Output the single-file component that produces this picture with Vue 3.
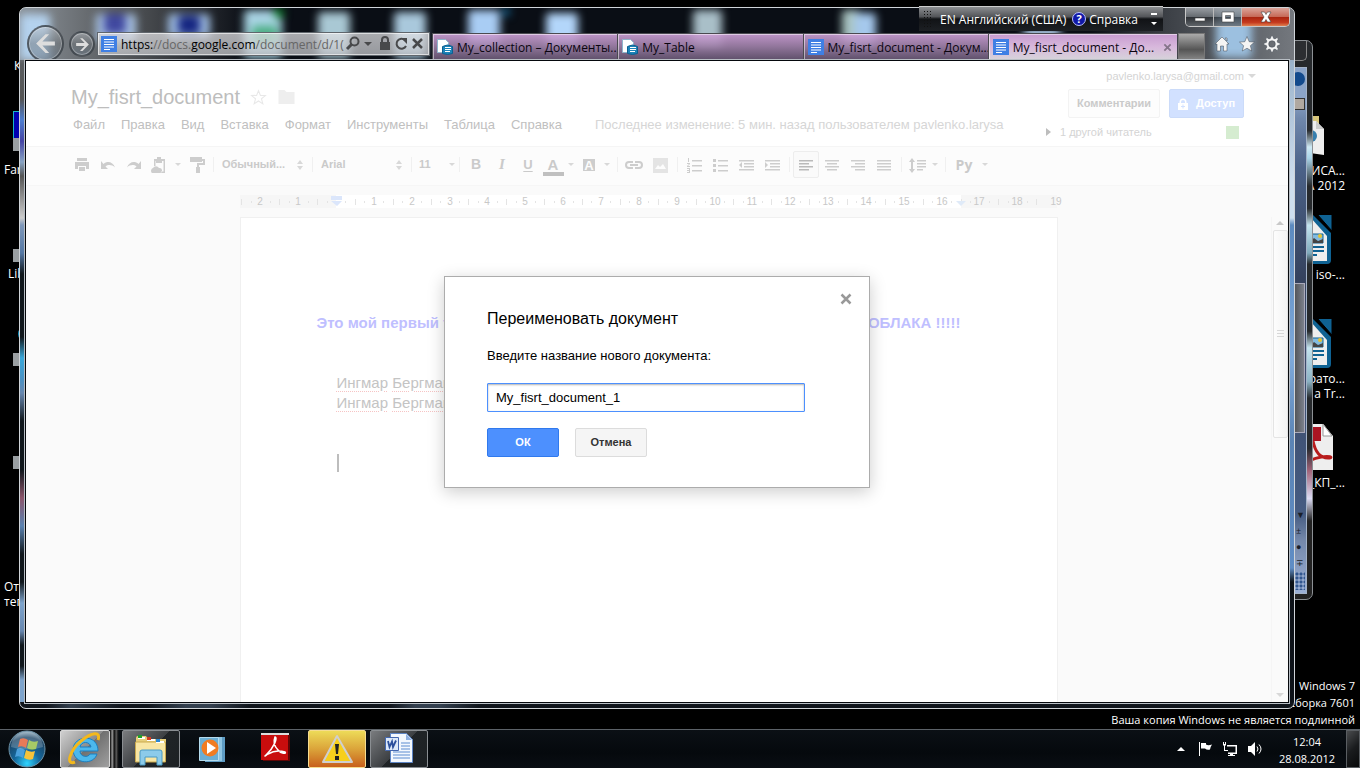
<script setup>
import { ref } from 'vue'

const docName = ref('My_fisrt_document_1')

const menus = ['Файл', 'Правка', 'Вид', 'Вставка', 'Формат', 'Инструменты', 'Таблица', 'Справка']

const tabs = [
  { title: 'My_collection – Документы...', kind: 'drive' },
  { title: 'My_Table', kind: 'drive' },
  { title: 'My_fisrt_document - Докум...', kind: 'doc' },
  { title: 'My_fisrt_document - До...', kind: 'doc', active: true },
]

const lines = (rows) => rows.map(([x, y, w]) => `M${x} ${y}h${w}v1.5h-${w}z`).join('')

const tools = [
  { name: 'Печать', d: 'M4 2h10v3H4zM2 6h14v7h-3v-3H5v3H2zM6 11h6v4H6z' },
  { name: 'Отменить', d: 'M2 5v8h7L6.5 10.500C9 8.500 13 8.500 16 11.500C14 6 8.500 4.500 4.500 8z' },
  { name: 'Повторить', d: 'M16 5v8H9l2.500-2.500C9 8.500 5 8.500 2 11.500C4 6 9.500 4.500 13.500 8z' },
  { name: 'Вставить', size: 'mid', d: 'M4 3h3V1h4v2h4v14h-4v-1.500h2.500V5H12v2H6V5H5.500v5H4zM2 17a3 3 0 0 1 1-5 3.500 3.500 0 0 1 6 0 2.500 2.500 0 0 1 1 5z' },
  { arrow: true },
  { name: 'Формат по образцу', size: 'mid', d: 'M2 1h12v2h3v6h-6v2h1v6H8v-6h1V7h6V5h-1v1H2z' },
  { sep: true },
  { select: 'Обычный...', label: 'Стиль' },
  { sep: true },
  { select: 'Arial', label: 'Шрифт' },
  { sep: true },
  { select: '11', label: 'Размер', small: true },
  { sep: true },
  { name: 'Полужирный', text: 'B', cls: 'bold' },
  { name: 'Курсив', text: 'I', cls: 'italic' },
  { name: 'Подчеркнутый', text: 'U', cls: 'under' },
  { name: 'Цвет текста', text: 'A', cls: 'ink', size: 'mid' },
  { arrow: true, tight: true },
  { name: 'Цвет фона', text: 'A', cls: 'mark', size: 'mid' },
  { arrow: true, tight: true },
  { sep: true },
  { name: 'Ссылка', d: 'M8 5H4a4 4 0 0 0 0 8h4v-2H4a2 2 0 0 1 0-4h4zM10 5h4a4 4 0 0 1 0 8h-4v-2h4a2 2 0 0 0 0-4h-4zM5 8h8v2H5z' },
  { name: 'Изображение', pale: true, d: 'M2 2h15v15H2zM4 13h11l-3-5-3 3-2-2z' },
  { sep: true },
  { name: 'Нумерованный список', d: lines([[7, 4, 10], [7, 9, 10], [7, 14, 10]]) + 'M3 2h1v4H3zM2 7h3v1L3 10h2v1H2v-1l2-2H2zM2 12h3v5H2v-1h2v-1H2v-1h2v-1H2z' },
  { name: 'Маркированный список', d: lines([[7, 4, 10], [7, 9, 10], [7, 14, 10]]) + 'M2 3h3v3H2zM2 8h3v3H2zM2 13h3v3H2z' },
  { name: 'Уменьшить отступ', d: lines([[2, 4, 15], [7, 7, 10], [7, 10, 10], [2, 13, 15]]) + 'M5 6v6L2 9z' },
  { name: 'Увеличить отступ', d: lines([[2, 4, 15], [7, 7, 10], [7, 10, 10], [2, 13, 15]]) + 'M2 6v6l3-3z' },
  { sep: true },
  { name: 'По левому краю', on: true, d: lines([[2, 4, 14], [2, 7, 10], [2, 10, 14], [2, 13, 10]]) },
  { name: 'По центру', d: lines([[2, 4, 14], [4, 7, 10], [2, 10, 14], [4, 13, 10]]) },
  { name: 'По правому краю', d: lines([[2, 4, 14], [6, 7, 10], [2, 10, 14], [6, 13, 10]]) },
  { name: 'По ширине', d: lines([[2, 4, 14], [2, 7, 14], [2, 10, 14], [2, 13, 14]]) },
  { sep: true },
  { name: 'Интервал', size: 'mid', d: lines([[9, 4, 9], [9, 7, 9], [9, 10, 9], [9, 13, 6]]) + 'M4 2l3 4H5v7h2l-3 4-3-4h2V6H1z' },
  { arrow: true, tight: true },
  { sep: true },
  { name: 'Способ ввода', text: 'Ру', cls: 'input-lang' },
  { arrow: true, tight: true },
]

const unit = 37.85
const zero = 96
const marks = Array.from({ length: 21 }, (_, i) => i - 2).filter((n) => n !== 0 && n !== 19)
const ticks = Array.from({ length: 22 }, (_, i) => i - 3)

const glows = [
  [0, 6, 30, 50, '#b4d2ee'], [76, 6, 40, 28, '#a9c4e4'], [84, 6, 22, 20, '#4048a0'],
  [148, 6, 42, 24, '#9fbde2'], [158, 8, 22, 18, '#142480'], [224, 2, 38, 48, '#a9d4e4'],
  [232, 18, 26, 18, '#4cae84'], [254, 0, 10, 10, '#0e7a2a'], [298, 4, 32, 46, '#a9c8d4'],
  [374, 4, 32, 46, '#a9c8dc'], [448, 2, 32, 38, '#a9cdf4'], [482, 0, 8, 8, '#146898'],
  [526, 5, 32, 34, '#b3d6fa'], [673, 2, 29, 38, '#a9bfc8'], [822, 2, 18, 38, '#a9c4c0'],
  [834, 5, 22, 34, '#a5c8ec'], [1004, 20, 36, 22, '#b0cdea'], [1196, 2, 36, 48, '#9cc0e0'],
]
</script>

<template>
  <main class="desktop">
    <section class="icons-left" aria-label="Значки слева">
      <span class="lbl k">К</span>
      <span class="far"></span>
      <span class="lbl fa">Far</span>
      <span class="short s1"></span>
      <span class="lbl li">Libr</span>
      <span class="short s2"></span>
      <svg class="blob" viewBox="0 0 20 24"><circle cx="12" cy="9" r="9" /><circle cx="14" cy="16" r="7" /></svg>
      <span class="short s3"></span>
      <span class="short s4"></span>
      <span class="lbl ot">Отк<br>тег</span>
    </section>

    <section class="icons-right" aria-label="Значки справа">
      <svg class="folder" viewBox="0 0 50 50"><path fill="#d8c77c" d="M20 4h24v36H20z" /><path fill="#eee" d="M28 9h13l8 8v26l-21-3z" /><path fill="#ccc" d="M41 9v8h8z" /><circle cx="36" cy="24" r="6" fill="#377fae" /></svg>
      <span class="lbl r1">ЛИСА...<br>А 2012</span>
      <svg v-for="n in 2" :key="n" class="writer" :class="'w' + n" viewBox="0 0 42 50">
        <path fill="#0f6293" d="M2 0h20l18 18v27q0 4-4 4H2z" /><path fill="#eee" d="M4 3h16l16 18v25H4z" />
        <path fill="#0f6293" stroke="#000" d="M26-1h15v17z" /><path fill="#82bbe0" stroke="#0f6293" d="M18 19h14v9H18z" />
        <path fill="#444" d="M18 28l5-5 4 3 5-2v4z" /><circle cx="29" cy="21" r="2" fill="#e5c32f" />
        <path stroke="#0f6293" stroke-width="2" d="M12 32h21M12 36h21M12 40h14" />
      </svg>
      <span class="lbl r2">iso-...</span>
      <span class="lbl r3">рато...<br>а Tr...</span>
      <svg class="pdf" viewBox="0 0 42 46"><path fill="#eee" d="M0 0h32l10 12v34H0z" /><path fill="#aa1422" d="M4 3h26v14H4z" /><path fill="#fff" stroke="#999" d="M32 0v12h9z" /><path fill="none" stroke="#b81c1c" stroke-width="3" d="M22 17c2 10 6 17 15 17s-4-6-25 6" /></svg>
      <span class="lbl r4">_КП_...</span>
    </section>

    <p class="genuine">Windows 7<br>Сборка 7601<br><span>Ваша копия Windows не является подлинной</span></p>

    <section class="back-window" aria-label="Окно документа">
      <div class="back-buttons"></div>
      <div class="back-body">
        <span class="back-help"></span>
        <span class="back-ruler"></span>
        <span class="back-thumb"></span>
        <span class="back-nav">▼<br>±<br>●<br>∓</span>
        <span class="back-grip"></span>
      </div>
    </section>

    <section class="browser" aria-label="Браузер">
      <header class="chrome">
        <svg class="glass" aria-hidden="true">
          <rect v-for="(g, i) in glows" :key="i" :x="g[0]" :y="g[1]" :width="g[2]" :height="g[3]" :fill="g[4]" rx="4" />
        </svg>
        <div class="nav">
          <button class="round back" aria-label="Назад"><svg viewBox="0 0 24 24"><path d="M3 12L12 3h3.500L9 10h12v4H9l6.500 7H12z" /></svg></button>
          <button class="round fwd" aria-label="Вперед"><svg viewBox="0 0 24 24"><path d="M21 12L12 3H8.500L15 10H3v4h12l-6.500 7H12z" /></svg></button>
        </div>
        <div class="address">
          <svg class="docico" viewBox="0 0 16 16"><path fill="#3f7fe4" d="M0 0h16v16H0z" /><path stroke="#fff" d="M3 3.500h10M3 6h10M3 8.500h10M3 11h10M3 13.500h6" /></svg>
          <a class="url" href="#">https:<i>//docs.</i>google.com<i>/document/d/1(</i></a>
          <svg class="adr-tools" viewBox="0 0 80 18">
            <g fill="none" stroke="#48494b" stroke-width="2"><circle cx="9.500" cy="6.500" r="4" /><path d="M6.500 9.500L2 14" stroke-width="3" /><path d="M60 5a5 5 0 1 0 1 6" /><path d="M68 4l9 9M77 4l-9 9" stroke-width="2.500" /></g>
            <path fill="#48494b" d="M19 7h8l-4 4zM35 7h10v8H35zM56 3h6v6z" /><path fill="none" stroke="#48494b" stroke-width="2" d="M37 8V5a3 3 0 0 1 6 0v3" />
          </svg>
        </div>
        <nav class="tabs">
          <div v-for="(t, i) in tabs" :key="i" class="tab" :class="{ active: t.active }">
            <svg v-if="t.kind === 'doc'" class="docico" viewBox="0 0 16 16"><path fill="#3f7fe4" d="M0 0h16v16H0z" /><path stroke="#fff" d="M3 3.500h10M3 6h10M3 8.500h10M3 11h10M3 13.500h6" /></svg>
            <svg v-else class="docico" viewBox="0 0 16 16"><path fill="#fff" stroke="#8fb5cc" d="M.5.500h8l3 3v10H.500z" /><path fill="#1c83b8" stroke="#0b5f90" d="M5.500 7.500q5-3 10 0v7q-5 2-10 0z" /><path stroke="#fff" d="M8 8.500h6M8 10.500h6M8 12.500h5" /></svg>
            <a href="#">{{ t.title }}</a>
            <button v-if="t.active" class="tab-x" aria-label="Закрыть вкладку"><svg viewBox="0 0 10 10"><path d="M1.500 1.500l7 7M8.500 1.500l-7 7" /></svg></button>
          </div>
          <button class="new-tab" aria-label="Новая вкладка"></button>
        </nav>
        <div class="ie-tools">
          <button aria-label="Домой"><svg viewBox="0 0 16 16"><path d="M8 1l7 7h-2v7H9.500v-5h-3v5H3V8H1zM11 2h2v3z" /></svg></button>
          <button aria-label="Избранное"><svg viewBox="0 0 16 16"><path d="M8 .5l2.200 5.200 5.300.4-4.100 3.600L12.700 15 8 12.200 3.300 15l1.300-5.300L.5 6.100l5.300-.4z" /></svg></button>
          <button aria-label="Сервис"><svg viewBox="0 0 16 16"><path fill-rule="evenodd" d="M7 0h2l.5 2.300 1.500.6L13 1.600 14.400 3l-1.300 2 .6 1.500L16 7v2l-2.300.5-.6 1.500 1.300 2-1.400 1.400-2-1.300-1.500.6L9 16H7l-.5-2.300-1.500-.6-2 1.300L1.600 13l1.300-2-.6-1.500L0 9V7l2.300-.5.6-1.500-1.300-2L3 1.600l2 1.300 1.500-.6zM8 4.700a3.300 3.300 0 1 0 0 6.600 3.300 3.300 0 0 0 0-6.600z" /></svg></button>
        </div>
        <div class="win-controls">
          <button class="min" aria-label="Свернуть"><svg viewBox="0 0 14 12"><path d="M2 7h10v3H2z" /></svg></button>
          <button class="max" aria-label="Развернуть"><svg viewBox="0 0 14 12"><path fill-rule="evenodd" d="M1 1h12v10H1zM4.500 4.500v3h5v-3z" /></svg></button>
          <button class="close" aria-label="Закрыть"><svg viewBox="0 0 14 12"><path d="M2 1h3.500L7 3.500 8.500 1H12L9 6l3 5H8.500L7 8.500 5.500 11H2l3-5z" /></svg></button>
        </div>
      </header>

      <div class="page">
        <header class="doc-head">
          <div class="head-left">
            <h1>My_fisrt_document
              <svg class="star" viewBox="0 0 16 16"><path d="M8 1.500l1.800 4.500 4.700.2-3.700 3 1.300 4.800L8 11.300 3.900 14l1.300-4.800-3.700-3 4.700-.2z" /></svg>
              <svg class="dir" viewBox="0 0 16 16"><path d="M0 1h6l2 2h8v12H0z" /></svg>
            </h1>
            <nav class="menu">
              <a v-for="m in menus" :key="m" href="#">{{ m }}</a>
              <span class="changed">Последнее изменение: 5 мин. назад пользователем pavlenko.larysa</span>
            </nav>
          </div>
          <div class="head-right">
            <a class="mail" href="#">pavlenko.larysa@gmail.com <i class="tri"></i></a>
            <div class="head-btns">
              <button class="comments">Комментарии</button>
              <button class="share"><svg viewBox="0 0 10 12"><path fill-rule="evenodd" d="M0 5h1.500V4a3.500 3.500 0 0 1 7 0v1H10v7H0zM3 5h4V4a2 2 0 0 0-4 0zM4.500 6.500v1.500H3v1h1.500v1.500h1V9H7V8H5.500V6.500z" /></svg>Доступ</button>
            </div>
            <div class="readers"><i class="play"></i><span>1 другой читатель</span><i class="who"></i></div>
          </div>
        </header>

        <div class="toolbar">
          <template v-for="(t, i) in tools" :key="i">
            <i v-if="t.sep" class="sep"></i>
            <span v-else-if="t.arrow" class="arrow" :class="{ tight: t.tight }"><i class="tri"></i></span>
            <label v-else-if="t.select" class="pick" :class="{ small: t.small }">
              <select :aria-label="t.label"><option>{{ t.select }}</option></select>
              <i v-if="t.small" class="tri"></i>
              <svg v-else viewBox="0 0 6 10"><path d="M0 4l3-4 3 4zM0 6h6l-3 4z" /></svg>
            </label>
            <button v-else class="tool" :class="[t.size, t.cls, { on: t.on, pale: t.pale }]" :aria-label="t.name">
              <svg v-if="t.d" viewBox="0 0 18 18"><path fill-rule="evenodd" :d="t.d" /></svg>
              <span v-else>{{ t.text }}</span>
            </button>
          </template>
        </div>

        <div class="canvas">
          <div class="sheet-col">
            <svg class="ruler" viewBox="0 0 826 13">
              <path fill="#f6f6f6" d="M0 0h817v13H0z" /><path fill="#fff" d="M96 0h625v13H96z" />
              <g v-for="n in ticks" :key="'t' + n" fill="#e4e4e4">
                <rect v-if="n < 19" :x="Math.round(zero + unit * (n + 0.5))" y="4" width="1" height="6" />
                <rect v-if="n > -3" :x="Math.round(zero + unit * (n + 0.25))" y="6" width="1" height="2" />
                <rect v-if="n < 18" :x="Math.round(zero + unit * (n + 0.75))" y="6" width="1" height="2" />
              </g>
              <text v-for="n in marks" :key="n" :x="Math.round(zero + unit * n)" y="10">{{ Math.abs(n) }}</text>
              <text x="816" y="10">19</text>
              <path fill="#dbe6fb" d="M91 1h11v4H91zM91 6h11l-5 5z" /><path fill="#dfeaf8" d="M716 6h10l-5 5z" />
            </svg>
            <article class="sheet">
              <h2><span>Это мой первый текст</span><span>ОБЛАКА !!!!!</span></h2>
              <p><u>Ингмар</u> <u>Бергман</u></p>
              <p><u>Ингмар</u> <u>Бергман</u></p>
              <i class="caret"></i>
            </article>
          </div>
          <div class="scroll"><i class="up"></i><i class="thumb"></i><i class="down"></i></div>
        </div>

        <div class="overlay">
          <form class="dialog" role="dialog" aria-labelledby="dlg" @submit.prevent>
            <button type="button" class="dlg-x" aria-label="Закрыть"><svg viewBox="0 0 12 12"><path d="M1.500 1.500l9 9M10.500 1.500l-9 9" /></svg></button>
            <h3 id="dlg">Переименовать документ</h3>
            <label for="name">Введите название нового документа:</label>
            <input id="name" v-model="docName" type="text">
            <div class="dlg-btns"><button class="ok">ОК</button><button type="button" class="cancel">Отмена</button></div>
          </form>
        </div>
      </div>
    </section>

    <aside class="langbar">
      <i class="dots"></i><span>EN Английский (США)</span><i class="q">?</i><span>Справка</span>
      <svg viewBox="0 0 8 14"><path d="M1 1h6v2H1zM1 10h6l-3 3z" /></svg>
    </aside>

    <footer class="taskbar">
      <button class="start" aria-label="Пуск">
        <svg viewBox="0 0 38 38">
          <defs><radialGradient id="orb" cx=".5" cy=".9" r=".9"><stop offset="0" stop-color="#2fd4ff" /><stop offset=".4" stop-color="#14679c" /><stop offset=".8" stop-color="#1b4465" /><stop offset="1" stop-color="#9db8c8" /></radialGradient></defs>
          <circle cx="19" cy="19" r="18" fill="url(#orb)" stroke="#6e93a8" />
          <path fill="#e2552a" d="M12 9q4-2 8 1l-2 8q-4-3-8-1z" /><path fill="#8dbb3b" d="M21 10q4 3 9 1l-2 8q-5 2-9-1z" />
          <path fill="#4aa0dc" d="M9 19q4-2 8 1l-2 8q-4-3-8-1z" /><path fill="#f6c33a" d="M18 20q5 3 9 1l-2 8q-4 2-9-1z" />
          <path fill="#fff" opacity=".22" d="M3 17a16 15 0 0 1 32 0q-16 5-32 0z" />
        </svg>
      </button>
      <button class="task ie" aria-label="Internet Explorer">
        <svg viewBox="0 0 36 34"><path fill="#4cb8ec" stroke="#1b7fc0" fill-rule="evenodd" d="M31 19H13c0 6 8 7 10 3h7c-3 11-23 11-24-4C6 3 31 1 31 19zM13 15h11c-1-6-10-6-11 0z" /><path fill="none" stroke="#f3b81c" stroke-width="3" d="M8 30C-2 34 3 18 14 9S34-1 31 8" /></svg>
      </button>
      <i class="stack"></i>
      <button class="task on" aria-label="Проводник">
        <svg viewBox="0 0 36 34"><path fill="#e8cf7a" d="M3 6q0-2 2-2h8l2 3h18v22H3z" /><path fill="#f8e6a4" stroke="#c9a94e" d="M2.500 10h30v20h-30z" /><path fill="#fff" d="M5 5h7v2H5zM14 7h8v2h-8zM23 9h8v2h-8z" /><path fill="#1fa12a" d="M5 3h4v3H5z" /><path fill="#d63b22" d="M14 5h4v3h-4z" /><path fill="#2b87d0" d="M23 7h4v3h-4z" /><path fill="#8ccbea" stroke="#4a9ac4" d="M7 33V20q0-2 2-2h18q2 0 2 2v13h-5v-8H12v8z" /></svg>
      </button>
      <button class="task" aria-label="Проигрыватель">
        <svg viewBox="0 0 36 34"><path fill="#5e9cc4" d="M10 5h20v25H10z" /><path fill="#8fc5e2" d="M7 5h20v24H7z" /><path fill="#6aaed4" stroke="#b5dcee" d="M4.500 5.500h19v23h-19z" /><circle cx="15" cy="16" r="8.500" fill="#f07c22" /><path fill="#fff" d="M12 10l9 6-9 6z" /></svg>
      </button>
      <button class="task" aria-label="Acrobat">
        <svg viewBox="0 0 36 34"><path fill="#ddd" d="M4 1h28v3H4z" /><path fill="#5f0505" d="M6 3h27v26H6z" /><path fill="#c90d0d" d="M4 3h27v25H4z" /><path fill="none" stroke="#fff" stroke-width="1.500" d="M18 5c3 0-1 11-9 18-2 2-1 1 2-1 5-3 11-4 17-2 2 2-4 2-7-2-3-3-5-8-3-13z" /></svg>
      </button>
      <button class="task warn" aria-label="Предупреждение">
        <svg viewBox="0 0 36 34"><path fill="#f7cf1c" stroke="#cfcfcf" stroke-width="2" stroke-linejoin="round" d="M18 4L4 30h29z" /><path fill="#222" d="M16 12h4l-1 10h-2zM16 24h4v4h-4z" /></svg>
      </button>
      <button class="task on" aria-label="Word">
        <svg viewBox="0 0 36 34"><path fill="#f3f8fe" stroke="#5c84c4" d="M9.500 1.500h16l6 6v23h-22z" /><path fill="#8fb0e0" d="M25 2v6h6z" /><path stroke="#8fb0e0" stroke-width="1.500" d="M20 11h9M20 14h9M20 17h9M12 20h17M12 23h17M12 26h17" /><path fill="#dce8f8" stroke="#4468b0" d="M4.500 5.500h13v13h-13z" /><path fill="none" stroke="#2b4f9c" stroke-width="1.800" d="M7 9l1.500 6L11 9.500l1 5.500L15 8.500" /></svg>
      </button>
      <div class="tray">
        <svg class="tray-up" viewBox="0 0 8 4"><path d="M0 4l4-4 4 4z" /></svg>
        <svg viewBox="0 0 16 16"><path d="M2 1h1v14H2zM4 2h5v1.500q2 1.500 6 0-2 3-2 5-3 1-5-1H4z" /></svg>
        <svg viewBox="0 0 16 16"><path fill-rule="evenodd" d="M5 4h10v9H6v-1.500h7.500v-6H5zM1 1h1v2h1V1h1v3l-1 1v4h3v1H2V5L1 4zM8 13h3v1h2v1H6v-1h2z" /></svg>
        <svg viewBox="0 0 16 16"><path d="M1 5h3l4-4v14l-4-4H1z" /><path fill="none" stroke="#fff" d="M10 5.500q2 2.500 0 5M12 3.500q4 4.500 0 9" /></svg>
      </div>
      <div class="clock">12:04<br>28.08.2012</div>
      <button class="peek" aria-label="Свернуть все окна"></button>
    </footer>
  </main>
</template>

<style>
body { margin: 0; background: #000; overflow: hidden; }
</style>

<style scoped>
.desktop { position: relative; height: 100vh; background: #000; overflow: hidden; font: 12px/15px "Open Sans", "Noto Sans", sans-serif; color: #fff; display: flex; flex-direction: column; justify-content: flex-end; }
* { box-sizing: border-box; }
button, input, select { font: inherit; margin: 0; padding: 0; border: 0; background: none; color: inherit; }
button { display: flex; align-items: center; justify-content: center; }
a { color: inherit; text-decoration: none; }
h1, h2, h3, p { margin: 0; font-weight: normal; }
i { font-style: normal; }
svg { display: block; flex: none; }

/* desktop items */
.icons-left { position: absolute; inset: 0 auto 0 0; width: 40px; }
.icons-left > *, .icons-right > * { position: absolute; }
.lbl { font-size: 12px; line-height: 15px; white-space: nowrap; }
.k { left: 14px; top: 58px; }
.far { left: 13px; top: 111px; width: 30px; height: 28px; background: #0000b0; border: 1px solid #18b8c8; }
.fa { left: 4px; top: 162px; }
.li { left: 8px; top: 266px; }
.short { left: 13px; width: 12px; height: 13px; background: #9a9fa2; border-right: 6px solid #5a6a74; }
.s1 { top: 138px; }
.s2 { top: 249px; }
.s3 { top: 353px; }
.s4 { top: 456px; }
.blob { left: 15px; top: 325px; width: 20px; height: 24px; fill: #1494c4; }
.ot { left: 4px; top: 579px; }
.icons-right { position: absolute; inset: 0 0 0 auto; width: 90px; }
.icons-right .lbl { right: 15px; text-align: right; }
.folder { right: 35px; top: 112px; width: 50px; height: 50px; }
.r1 { top: 163px; }
.writer { right: 27px; width: 42px; height: 50px; }
.w1 { top: 215px; }
.w2 { top: 319px; }
.r2 { top: 267px; }
.r3 { top: 371px; }
.pdf { right: 27px; top: 424px; width: 42px; height: 46px; }
.r4 { top: 475px; }
.genuine { position: absolute; right: 5px; bottom: 40px; text-align: right; font-size: 11px; line-height: 17px; }

/* window behind */
.back-window { position: absolute; inset: 40px 47px 168px 200px; border: 1px solid #8c9094; border-radius: 7px; padding: 0 5px 5px; background: linear-gradient(#26292c 0 16%, #cfeaf5 19%, #a9d4e8 21%, #26292c 26% 30%, #c5e5f0 33%, #7faabc 38%, #26292c 40% 52%, #c5e5f0 55%, #8bb2c4 61%, #26292c 64% 73%, #a0647a 77%, #dcdcf4 82%, #222 86%); }
.back-buttons { height: 20px; margin-left: auto; width: 60px; border: 1px solid #888; border-top: 0; border-radius: 0 0 5px 5px; background: #2c2e31; }
.back-body { position: relative; height: calc(100% - 26px); margin-top: 6px; border: 1px solid #a4b3c8; background: linear-gradient(#8ba4c8 0 30px, #7088ac 50px, #4b6288 100px, #35425e 40%, #465c82 85%, #7488aa 90%, #9bb0d6); }
.back-body > * { position: absolute; right: 1px; }
.back-help { top: 4px; width: 14px; height: 14px; border-radius: 7px; background: #134a8c; }
.back-ruler { top: 30px; width: 14px; height: 12px; border: 1px solid #333; background: #b0a8a0; }
.back-thumb { top: 215px; width: 18px; height: 150px; border: 1px solid #aab; background: linear-gradient(90deg, #333, #7c818c); }
.back-nav { bottom: 22px; color: #1a1e28; font-size: 9px; line-height: 16px; }
.back-grip { bottom: 3px; width: 10px; height: 18px; background: radial-gradient(circle, #32578f 1px, transparent 2px) 0 0 / 4px 4px; }

/* browser window */
.browser { position: absolute; inset: 7px 65px 59px 19px; border: 1px solid #d0d4d8; border-radius: 7px; padding: 0 5px 5px; display: flex; flex-direction: column;
  background:
    linear-gradient(90deg, #10151c 2%, #34404f 4%, #10151c 8% 10%, #34404f 13% 15%, #10151c 18% 29%, #34404f 31% 33%, #10151c 36%) bottom / 100% 6px no-repeat,
    linear-gradient(#8fa0b0 0, #8c9298 6%, #5a5d60 8%, #555 13%, #4f7fd0 16%, #4444a4 19%, #88a4c4 22%, #555 24%, #ccc 30%, #7f98ba 31%, #5578a4 35%, #10171c 38% 47%, #3aa8da 50%, #4a92c4 53%, #6888b0 55%, #10171c 59% 66%, #8c566c 70%, #5a82b0 74%, #10171c 78% 82%, #7ea4cc 85%, #6888b0 89%, #10171c 91% 94%, #7ea4cc 96%) left / 50% 100% no-repeat,
    linear-gradient(#7c8085 0, #9cb4cc 8%, #cfdfee 25% 30%, #5c8abf 31%, #7ea9da 50%, #5b84b5 62%, #5f8dc5 80%, #0d1218 82%) right / 50% 100% no-repeat; }
.chrome { position: relative; height: 52px; margin: 0 -5px; display: flex; padding-left: 7px; overflow: hidden; border-radius: 6px 6px 0 0; background: linear-gradient(90deg, #8b9299 0, #55585b 8%, #0a0e15 18% 84%, #3c4046 90%, #74787e); }
.glass { position: absolute; inset: 0; width: 100%; height: 100%; filter: blur(4px); }
.nav { position: relative; display: flex; width: 70px; padding-top: 17px; }
.round { border-radius: 50%; border: 2px solid rgba(52, 58, 64, .7); background: linear-gradient(rgba(190, 195, 200, .5), rgba(110, 115, 120, .5) 50%, rgba(100, 115, 130, .5)); box-shadow: inset 0 0 0 1px rgba(255, 255, 255, .3); flex: none; }
.round path { fill: #ddd; }
.back { width: 37px; height: 37px; }
.back svg { width: 25px; height: 25px; }
.fwd { width: 26px; height: 26px; margin: 6px 0 0 5px; }
.fwd svg { width: 17px; height: 17px; }
.address { position: relative; margin-top: 24px; width: 333px; height: 24px; border: 1px solid #60666c; box-shadow: inset 0 0 0 1px rgba(255, 255, 255, .6); background: linear-gradient(rgba(225, 225, 228, .74), rgba(190, 192, 196, .78)); display: flex; align-items: center; padding: 0 4px 0 3px; color: #000; }
.docico { width: 16px; height: 16px; }
.url { margin-left: 4px; flex: 1; width: 0; overflow: hidden; white-space: nowrap; }
.url i { color: #666; }
.adr-tools { width: 80px; height: 18px; }
.tabs { position: relative; margin: 25px 0 0 2px; flex: 1; display: flex; height: 27px; }
.tab { flex: 1; width: 0; display: flex; align-items: center; gap: 4px; padding-left: 4px; color: #0a0510; border: 1px solid #4a4a50; border-width: 1px 0 0 1px; box-shadow: inset 1px 1px 0 rgba(255, 255, 255, .5); background: linear-gradient(rgba(205, 160, 215, .92), rgba(158, 128, 168, .9) 50%, rgba(100, 84, 112, .93)); white-space: nowrap; }
.tab a { flex: 1; width: 0; }
.tab.active { padding-right: 4px; background: linear-gradient(#c79bd0, #d8b8dc 50%, #d6d4da); }
.tab-x { width: 12px; height: 16px; }
.tab-x svg { width: 9px; height: 9px; stroke: #85758a; stroke-width: 2; }
.new-tab { width: 27px; margin-left: 1px; border: 1px solid #777; background: linear-gradient(#aaa, #555 60%, #888); border-bottom: 0; }
.ie-tools { position: relative; display: flex; gap: 9px; padding: 28px 14px 8px 9px; }
.ie-tools svg { width: 16px; height: 16px; fill: #f4f4f4; stroke: #3e4650; stroke-width: .5; }
.win-controls { position: absolute; right: 4px; top: 0; height: 19px; display: flex; border: 1px solid #c8c8c8; border-top: 0; border-radius: 0 0 5px 5px; overflow: hidden; }
.win-controls button { border-right: 1px solid #bbb; width: 28px; background: linear-gradient(rgba(170, 175, 180, .8), rgba(110, 115, 120, .8) 48%, rgba(35, 38, 42, .75) 50%, rgba(100, 105, 110, .8)); }
.win-controls .close { width: 47px; border: 0; background: linear-gradient(#dba49a, #c66a58 48%, #a82410 50%, #c5391d 80%, #e08050); }
.win-controls svg { width: 14px; height: 12px; fill: #fff; stroke: #444; stroke-width: .6; }

/* document page */
.page { position: relative; flex: 1; min-height: 0; outline: 1px solid #05080c; box-shadow: 0 0 0 2px #b8bec4; margin: 1px 1px; background: #fafafa; display: flex; flex-direction: column; font-family: "Liberation Sans", Arial, sans-serif; overflow: hidden; color: #c0c0c0; }
.doc-head { display: flex; justify-content: space-between; background: #fff; height: 86px; border-bottom: 1px solid #f5f5f5; flex: none; }
.head-left { padding: 22px 0 0 45px; }
h1 { font-size: 20px; line-height: 28px; display: flex; align-items: center; color: #bdbdbd; }
.star { width: 17px; height: 17px; margin-left: 10px; fill: none; stroke: #e8e8e8; }
.dir { width: 17px; height: 16px; margin-left: 11px; fill: #eee; }
.menu { display: flex; gap: 16px; font-size: 13px; line-height: 20px; margin: 4px 0 0 2px; white-space: nowrap; }
.changed { margin-left: 17px; color: #d6d6d6; }
.head-right { width: 210px; margin-right: 32px; padding-top: 6px; font-size: 11px; color: #d4d4d4; }
.mail { display: flex; justify-content: flex-end; align-items: center; gap: 4px; line-height: 18px; }
.tri { border: 4px solid transparent; border-top-color: #d8d8d8; border-bottom: 0; width: 0; height: 0; flex: none; }
.head-btns { display: flex; justify-content: flex-end; gap: 9px; margin: 4px 12px 0 0; font-weight: bold; }
.head-btns button { height: 29px; border: 1px solid #f3f3f3; border-radius: 2px; background: #fdfdfd; color: #cacaca; width: 92px; }
.head-btns .share { width: 75px; gap: 8px; background: #d2e1ff; border-color: #cbdbf9; color: #fff; }
.share svg { width: 10px; height: 12px; fill: #fff; }
.readers { display: flex; align-items: center; line-height: 20px; margin: 4px 17px 0 0; }
.play { border: 4px solid transparent; border-left: 5px solid #bdbdbd; border-right: 0; margin-right: 9px; }
.who { width: 13px; height: 13px; margin-left: auto; background: #d5ecd0; }
.toolbar { display: flex; height: 39px; flex: none; padding: 4px 0 7px 43px; background: #fcfcfc; border-bottom: 1px solid #f6f6f6; font-size: 11px; font-weight: bold; color: #cacaca; }
.toolbar > * { flex: none; height: 27px; }
.tool { width: 26px; border-radius: 2px; fill: #cdcdcd; }
.tool svg { width: 18px; height: 18px; }
.tool.mid { width: 24px; }
.tool.pale { fill: #e4e4e4; }
.tool.on { border: 1px solid #ededed; fill: #bababa; background: #fafafa; }
.bold { font-size: 14px; }
.italic { font: italic bold 15px "Liberation Serif", serif; }
.under { font-size: 13px; text-decoration: underline; text-underline-offset: 2px; }
.ink span { font-size: 15px; line-height: 15px; width: 21px; padding-top: 3px; border-bottom: 4px solid #c0c0c0; }
.mark span { width: 12px; height: 12px; background: #cdcdcd; color: #fcfcfc; font-size: 13px; line-height: 13px; }
.tool.input-lang { width: 30px; font-size: 14px; font-family: "Open Sans", sans-serif; }
.sep { width: 8px; background: linear-gradient(#f0f0f0, #f0f0f0) center / 1px 15px no-repeat; }
.arrow { width: 14px; display: flex; align-items: center; justify-content: center; }
.arrow .tri, .pick .tri { border-width: 3px; border-bottom: 0; }
.arrow.tight { width: 12px; }
.pick { width: 91px; display: flex; align-items: center; padding: 0 5px; }
.pick select { appearance: none; flex: 1; width: 0; opacity: 1; }
.pick svg { width: 6px; height: 10px; fill: #d8d8d8; }
.pick.small { width: 40px; padding: 0 0 0 4px; }
.canvas { flex: 1; min-height: 0; display: flex; }
.sheet-col { flex: 1; display: flex; flex-direction: column; align-items: center; padding-top: 9px; }
.ruler { width: 826px; height: 13px; margin-left: 8px; overflow: visible; }
.ruler text { font-size: 10px; text-anchor: middle; fill: #c8c8c8; }
.sheet { position: relative; width: 818px; flex: 1; margin-top: 9px; border: 1px solid #f0f0f0; border-bottom: 0; background: #fff; padding: 95px 96px 0; font-size: 15px; line-height: 20px; color: #c4c4c4; }
.sheet h2 { font-size: 15px; font-weight: bold; color: #bfbfff; display: flex; justify-content: space-between; margin: 0 0 40px -20px; }
.sheet u { text-decoration: underline dotted #f6c4c4 1px; text-underline-offset: 3px; }
.caret { display: block; width: 2px; height: 18px; margin-top: 41px; background: #bdbdbd; }
.scroll { width: 17px; margin-top: 31px; display: flex; flex-direction: column; align-items: center; border-left: 1px solid #f5f5f5; padding: 4px 0 5px; }
.up { border: 4px solid transparent; border-top: 0; border-bottom-color: #c8c8c8; }
.down { border: 4px solid transparent; border-bottom: 0; border-top-color: #d8d8d8; margin-top: auto; }
.thumb { width: 15px; height: 208px; margin-top: 5px; border: 1px solid #e4e4e4; border-radius: 2px; background: repeating-linear-gradient(#d8d8d8 0 1px, transparent 1px 3px) center / 7px 9px no-repeat, linear-gradient(90deg, #fdfdfd, #f3f3f3); }

/* dialog */
.overlay { position: absolute; inset: 0; display: flex; align-items: center; justify-content: center; }
.dialog { position: relative; width: 426px; padding: 30px 42px; background: #fff; border: 1px solid #acacac; box-shadow: 0 4px 16px rgba(0, 0, 0, .2); color: #000; display: flex; flex-direction: column; align-items: flex-start; }
.dlg-x { position: absolute; right: 17px; top: 16px; width: 12px; height: 12px; }
.dlg-x svg { width: 12px; height: 12px; stroke: #999; stroke-width: 2.500; }
h3 { font-size: 16px; line-height: 24px; }
.dialog label { font-size: 13px; line-height: 20px; margin: 15px 0 17px; }
.dialog input { width: 318px; height: 29px; border: 1px solid #4d90fe; border-radius: 1px; box-shadow: inset 0 1px 2px rgba(0, 0, 0, .3); padding: 0 8px; font-size: 13px; outline: none; }
.dlg-btns { display: flex; gap: 16px; margin-top: 16px; font-size: 11px; font-weight: bold; }
.dlg-btns button { width: 72px; height: 29px; border-radius: 2px; }
.ok { background: #4d90fe; border: 1px solid #3079ed; color: #fff; }
.cancel { background: #f5f5f5; border: 1px solid #dcdcdc; color: #333; }

/* language bar */
.langbar { position: absolute; right: 197px; top: 6px; width: 244px; height: 25px; display: flex; align-items: center; padding: 0 5px 0 4px; background: linear-gradient(#8b8d90, #54565a 40%, #111316 50%, #1d2024); border-top: 1px solid #ccc; white-space: nowrap; }
.dots { width: 9px; height: 18px; margin-right: 8px; background: radial-gradient(circle, #111 1px, transparent 1px) 0 0 / 3px 3px; }
.q { width: 14px; height: 14px; margin: 0 3px 0 auto; border-radius: 7px; border: 1px solid #b8c0ff; background: #1018a8; text-align: center; font-weight: bold; font-size: 11px; line-height: 12px; }
.langbar svg { width: 8px; height: 14px; fill: #fff; margin-left: 12px; }

/* taskbar */
.taskbar { position: relative; height: 39px; display: flex; align-items: stretch; border-top: 1px solid #5c6268; background: linear-gradient(#0b1015, #05090d 60%, #0a0e13); }
.start { width: 38px; margin: 0 14px 0 8px; }
.start svg { width: 38px; height: 38px; }
.task { width: 58px; margin-right: 4px; border-radius: 2px; }
.task svg { width: 36px; height: 34px; }
.ie { width: 50px; margin-right: 0; border: 1px solid #d8d8d8; background: linear-gradient(135deg, #d0d0d0, #8c8c8c 50%, #707070 51%, #a0a0a0); }
.stack { width: 12px; background: linear-gradient(90deg, #222 1px, #aaa 2px, #222 4px, #111 5px, #666 6px, #181818 8px, transparent 9px); }
.on.task { border: 1px solid #8a8e92; background: linear-gradient(135deg, #7a7c7f, #3c3f42 50%, #202427 51%, #1c2023); }
.warn { border: 1px solid #f6dc90; background: linear-gradient(#eddb58, #dba43a 50%, #c8601c); }
.tray { margin-left: auto; display: flex; align-items: center; gap: 9px; fill: #fff; }
.tray svg { width: 16px; height: 16px; }
.tray .tray-up { width: 8px; height: 4px; margin-right: 3px; }
.clock { width: 78px; text-align: center; font-size: 11px; line-height: 17px; padding-top: 3px; margin-left: 5px; }
.peek { width: 14px; border: 1px solid #5a5e62; background: linear-gradient(135deg, #4a4c4e, #1a1c1e 50%, #08090a); }
</style>
